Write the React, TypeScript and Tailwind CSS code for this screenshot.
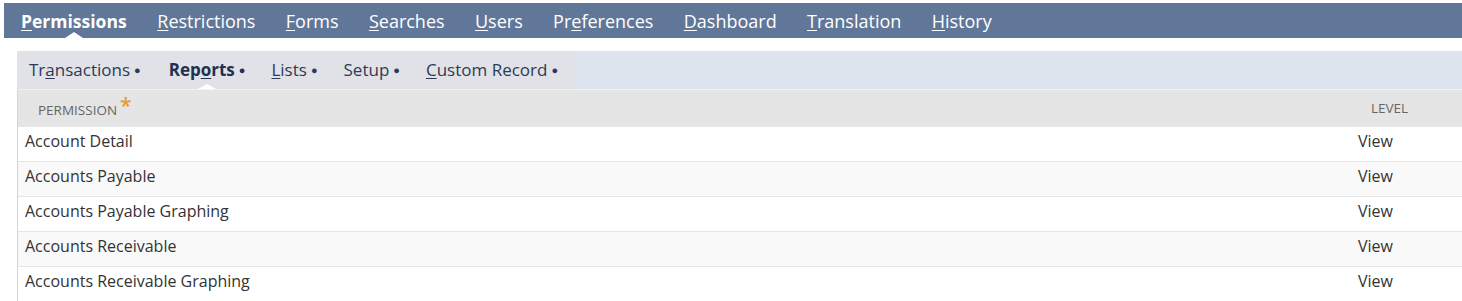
import React from "react";

const topTabs: { label: string; key: number }[] = [
  { label: "Permissions", key: 0 },
  { label: "Restrictions", key: 0 },
  { label: "Forms", key: 0 },
  { label: "Searches", key: 0 },
  { label: "Users", key: 0 },
  { label: "Preferences", key: 2 },
  { label: "Dashboard", key: 0 },
  { label: "Translation", key: 0 },
  { label: "History", key: 0 },
];

const subTabs: { label: string; key: number }[] = [
  { label: "Transactions", key: 2 },
  { label: "Reports", key: 3 },
  { label: "Lists", key: 0 },
  { label: "Setup", key: -1 },
  { label: "Custom Record", key: 0 },
];

const rows = [
  "Account Detail",
  "Accounts Payable",
  "Accounts Payable Graphing",
  "Accounts Receivable",
  "Accounts Receivable Graphing",
];

function Keyed({ label, k }: { label: string; k: number }) {
  if (k < 0) return <>{label}</>;
  return (
    <>
      {label.slice(0, k)}
      <span className="underline underline-offset-2">{label[k]}</span>
      {label.slice(k + 1)}
    </>
  );
}

export default function App() {
  return (
    <div className="w-[1462px] h-[301px] overflow-hidden bg-white pt-[3px] pl-[4px] font-['Open_Sans',sans-serif]">
      <div className="flex h-[35px] items-center bg-[#607799] pl-[1.5px]">
        {topTabs.map((t, i) => (
          <div
            key={t.label}
            className={
              "relative flex h-full items-center whitespace-nowrap pt-[1px] text-white " +
              (i === 0 ? "px-[15.5px] text-[17.5px] font-bold" : "px-[15.2px] text-[18px]")
            }
          >
            <Keyed label={t.label} k={t.key} />
            {i === 0 && (
              <span className="absolute bottom-0 left-1/2 -translate-x-1/2 border-x-[9px] border-b-[6px] border-x-transparent border-b-white" />
            )}
          </div>
        ))}
      </div>

      <div className="ml-[13px] mt-[13px]">
        <div className="flex h-[38px] bg-[#dee4ee]">
          <div className="flex w-[557px] items-center bg-[#e0e2e8] pl-[12px]">
            {subTabs.map((t, i) => (
              <div
                key={t.label}
                className={
                  "relative flex h-full items-center whitespace-nowrap text-[17px] " +
                  (i === 0 ? "pr-[28px] " : "pr-[26px] ") +
                  (i === 1 ? "font-bold text-[#23304f]" : "text-[#2f3a55]")
                }
              >
                <Keyed label={t.label} k={t.key} />
                <span className="ml-[4px] text-[11px]">●</span>
                {i === 1 && (
                  <span className="absolute bottom-0 left-[29px] border-x-[9px] border-b-[5px] border-x-transparent border-b-white" />
                )}
              </div>
            ))}
          </div>
        </div>

        <div className="border-l border-[#d6d6d6]">
          <div className="flex h-[38px] items-center border-t border-[#f2f2f2] bg-[#e5e5e5] text-[13.5px] text-[#666]">
            <div className="flex-1 pl-[20px]">
              PERMISSION
              <span className="relative top-[-2px] ml-[3px] text-[21px] font-semibold leading-none text-[#e89c2c]">*</span>
            </div>
            <div className="w-[91px]">LEVEL</div>
          </div>
          {rows.map((r, i) => (
            <div
              key={r}
              className={
                "flex h-[35px] border-b border-[#e5e5e5] text-[16px] text-[#333] " +
                (i % 2 === 1 ? "bg-[#f9f9f9]" : "bg-white")
              }
            >
              <div className="flex-1 pl-[7px] pt-[2px]">{r}</div>
              <div className="w-[104px] pt-[2px]">View</div>
            </div>
          ))}
        </div>
      </div>
    </div>
  );
}
